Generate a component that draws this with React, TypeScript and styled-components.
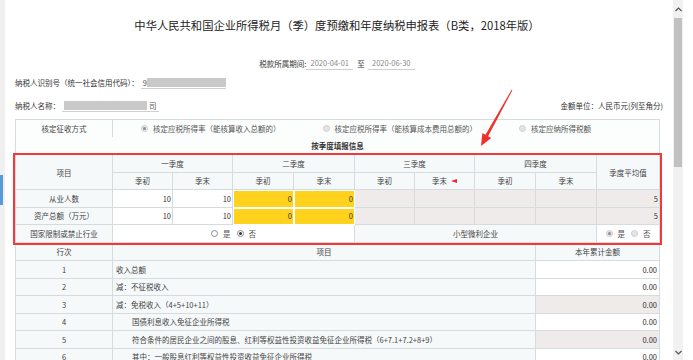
import styled, { createGlobalStyle } from 'styled-components';

const GlobalStyle = createGlobalStyle`
  html, body {
    margin: 0;
    padding: 0;
    background: #fff;
  }
  body {
    font-family: "Noto Sans CJK SC", "Noto Sans", sans-serif;
    color: #333;
  }
`;

const Page = styled.div`
  position: relative;
  display: flex;
  width: 693px;
  height: 360px;
  overflow: hidden;
  background: #fff;
`;

const Gutter = styled.div`
  flex: none;
  width: 5px;
  padding-top: 175px;
  background: #f0f0f0;
`;

const GutterTab = styled.div`
  width: 3px;
  height: 30px;
  background: #5b9ad8;
`;

const Main = styled.div`
  flex: none;
  width: 668px;
  padding: 18px 14px 0 10px;
  box-sizing: border-box;
`;

const Title = styled.h1`
  margin: 0;
  font-size: 11.3px;
  line-height: 14px;
  font-weight: normal;
  text-align: center;
  color: #222;
`;

const PeriodRow = styled.div`
  display: flex;
  justify-content: center;
  align-items: center;
  height: 14px;
  margin-top: 24px;
  font-size: 7.5px;
  color: #333;
`;

const DateField = styled.div`
  width: 47px;
  height: 14px;
  line-height: 14px;
  border-bottom: 1px solid #cfcfcf;
  box-sizing: border-box;
  text-align: center;
  color: #8a8a8a;
`;

const To = styled.span`
  margin: 0 3px 0 4px;
`;

const InfoRow = styled.div<{ $gap: number }>`
  display: flex;
  justify-content: space-between;
  align-items: center;
  height: 13px;
  margin-top: ${(p) => p.$gap}px;
  margin-right: -4px;
  font-size: 7.5px;
  color: #333;
`;

const LabelGroup = styled.div`
  display: flex;
  align-items: center;
`;

const Field = styled.div<{ $width: number }>`
  display: flex;
  align-items: center;
  width: ${(p) => p.$width}px;
  height: 13px;
  padding-left: 2px;
  border-bottom: 1px solid #cfcfcf;
  box-sizing: border-box;
  margin-left: 2px;
  color: #555;
`;

const Redacted = styled.span<{ $width: number }>`
  display: inline-block;
  width: ${(p) => p.$width}px;
  height: 9px;
  background: #c9c9c9;
`;

const Suffix = styled.span`
  margin-left: 2px;
`;

const TableWrap = styled.div`
  position: relative;
  margin-top: 7px;
`;

const Table = styled.table`
  width: 644px;
  border-collapse: collapse;
  table-layout: fixed;
  font-size: 7.5px;
  color: #444;
`;

const Row = styled.tr`
  height: 17.5px;
`;

const Cell = styled.td<{ $bg?: string }>`
  padding: 0 2px;
  border: 1px solid #d6dbde;
  background: ${(p) => p.$bg ?? '#f6f9fa'};
  text-align: center;
  white-space: nowrap;
  overflow: hidden;
`;

const PlainCell = styled.td`
  padding: 0;
  border: 1px solid #d6dbde;
  border-bottom: none;
  background: #fcfdfd;
  text-align: center;
`;

const SectionTitle = styled.td`
  border: 1px solid #d6dbde;
  border-top: none;
  background: #fcfdfd;
  text-align: center;
  font-weight: bold;
  color: #333;
`;

const OptionsCell = styled.td`
  border: 1px solid #d6dbde;
  border-bottom: none;
  background: #fcfdfd;
  padding: 0 0 0 28px;
`;

const Options = styled.div`
  display: flex;
  align-items: center;
  gap: 42px;
`;

const Choice = styled.label`
  display: inline-flex;
  align-items: center;
  gap: 5px;
  color: #555;
`;

const ChoiceGroup = styled.div`
  display: inline-flex;
  align-items: center;
  gap: 6px;
`;

const Radio = styled.span<{ $checked?: boolean; $disabled?: boolean }>`
  position: relative;
  display: inline-block;
  width: 7px;
  height: 7px;
  border-radius: 50%;
  box-sizing: border-box;
  border: 1px solid ${(p) => (p.$disabled ? '#cfcfcf' : '#8a8a8a')};
  background: ${(p) => (p.$disabled ? '#e4e4e4' : '#fff')};
  &::after {
    content: '';
    display: ${(p) => (p.$checked ? 'block' : 'none')};
    position: absolute;
    left: 1px;
    top: 1px;
    width: 3px;
    height: 3px;
    border-radius: 50%;
    background: ${(p) => (p.$disabled ? '#8f8f8f' : '#333')};
  }
`;

const ValueCell = styled.td<{ $tone: 'white' | 'yellow' | 'gray' }>`
  padding: 0 1px 0 0;
  border: 1px solid ${(p) => (p.$tone === 'yellow' ? '#fff' : '#d6dbde')};
  background: ${(p) =>
    p.$tone === 'yellow' ? '#ffd21d' : p.$tone === 'gray' ? '#efebeb' : '#fff'};
  box-shadow: ${(p) => (p.$tone === 'yellow' ? 'inset 1px 1px 0 #fff' : 'none')};
  text-align: right;
  color: #333;
`;

const Flag = styled.span`
  display: inline-block;
  width: 0;
  height: 0;
  margin-left: 4px;
  vertical-align: 1px;
  border-top: 2.5px solid transparent;
  border-bottom: 2.5px solid transparent;
  border-right: 6px solid #f0262b;
`;

const TextCell = styled.td<{ $indent?: boolean }>`
  padding: 0 0 0 ${(p) => (p.$indent ? 19 : 3)}px;
  border: 1px solid #d6dbde;
  background: #f6f9fa;
  text-align: left;
  white-space: nowrap;
  color: #444;
`;

const AmountCell = styled.td<{ $gray?: boolean }>`
  padding: 0 2px 0 0;
  border: 1px solid #d6dbde;
  background: ${(p) => (p.$gray ? '#efebeb' : '#fff')};
  text-align: right;
  color: #333;
`;

const Highlight = styled.div`
  position: absolute;
  left: -2px;
  top: 34px;
  width: 649px;
  height: 92px;
  border: 2px solid #f4383a;
  box-sizing: border-box;
  pointer-events: none;
`;

const Arrow = styled.svg`
  position: absolute;
  left: 475px;
  top: 86px;
  width: 42px;
  height: 64px;
  pointer-events: none;
`;

const Scrollbar = styled.div`
  flex: none;
  display: flex;
  flex-direction: column;
  width: 10px;
  background: #f1f1f1;
`;

const ScrollButton = styled.div<{ $height: number }>`
  display: flex;
  align-items: center;
  justify-content: center;
  height: ${(p) => p.$height}px;
`;

const Thumb = styled.div`
  height: 149px;
  margin: 0 1px;
  background: #c1c1c1;
`;

const Track = styled.div`
  flex: 1;
`;

const quarters = ['一季度', '二季度', '三季度', '四季度'];

const lines = [
  { no: '1', text: '收入总额' },
  { no: '2', text: '减：不征税收入' },
  { no: '3', text: '减：免税收入（4+5+10+11）', gray: true },
  { no: '4', text: '国债利息收入免征企业所得税', indent: true },
  {
    no: '5',
    text: '符合条件的居民企业之间的股息、红利等权益性投资收益免征企业所得税（6+7.1+7.2+8+9）',
    indent: true,
    gray: true,
  },
  { no: '6', text: '其中：一般股息红利等权益性投资收益免征企业所得税', indent: true },
];

const QuarterValues = ({ first, avg }: { first: string; avg: string }) => (
  <>
    <ValueCell $tone="white">{first}</ValueCell>
    <ValueCell $tone="white">{first}</ValueCell>
    <ValueCell $tone="yellow">0</ValueCell>
    <ValueCell $tone="yellow">0</ValueCell>
    <ValueCell $tone="gray" />
    <ValueCell $tone="gray" />
    <ValueCell $tone="gray" />
    <ValueCell $tone="gray" />
    <ValueCell $tone="gray">{avg}</ValueCell>
  </>
);

export default function App() {
  return (
    <>
      <GlobalStyle />
      <Page>
        <Gutter>
          <GutterTab />
        </Gutter>
        <Main>
          <Title>中华人民共和国企业所得税月（季）度预缴和年度纳税申报表（B类，2018年版）</Title>

          <PeriodRow>
            <span>税款所属期间:</span>
            <DateField>2020-04-01</DateField>
            <To>至</To>
            <DateField>2020-06-30</DateField>
          </PeriodRow>

          <InfoRow $gap={6}>
            <LabelGroup>
              <span>纳税人识别号（统一社会信用代码）：</span>
              <Field $width={85}>
                <span>9</span>
                <Redacted $width={79} />
              </Field>
            </LabelGroup>
          </InfoRow>

          <InfoRow $gap={10}>
            <LabelGroup>
              <span>纳税人名称：</span>
              <Field $width={97}>
                <Redacted $width={83} />
                <Suffix>司</Suffix>
              </Field>
            </LabelGroup>
            <span>金额单位：人民币元(列至角分)</span>
          </InfoRow>

          <TableWrap>
            <Table>
              <colgroup>
                <col style={{ width: 97 }} />
                <col style={{ width: 60 }} />
                <col style={{ width: 60 }} />
                <col style={{ width: 61 }} />
                <col style={{ width: 61 }} />
                <col style={{ width: 60 }} />
                <col style={{ width: 60 }} />
                <col style={{ width: 61 }} />
                <col style={{ width: 61 }} />
                <col style={{ width: 63 }} />
              </colgroup>
              <tbody>
                <Row>
                  <PlainCell>核定征收方式</PlainCell>
                  <OptionsCell colSpan={9}>
                    <Options>
                      <Choice>
                        <Radio $checked $disabled />
                        核定应税所得率（能核算收入总额的）
                      </Choice>
                      <Choice>
                        <Radio $disabled />
                        核定应税所得率（能核算成本费用总额的）
                      </Choice>
                      <Choice>
                        <Radio $disabled />
                        核定应纳所得税额
                      </Choice>
                    </Options>
                  </OptionsCell>
                </Row>
                <Row>
                  <SectionTitle colSpan={10}>按季度填报信息</SectionTitle>
                </Row>
                <Row>
                  <Cell rowSpan={2}>项目</Cell>
                  {quarters.map((q) => (
                    <Cell key={q} colSpan={2}>
                      {q}
                    </Cell>
                  ))}
                  <Cell rowSpan={2}>季度平均值</Cell>
                </Row>
                <Row>
                  {quarters.flatMap((q, i) => [
                    <Cell key={q + 'a'}>季初</Cell>,
                    <Cell key={q + 'b'}>
                      季末
                      {i === 2 && <Flag />}
                    </Cell>,
                  ])}
                </Row>
                <Row>
                  <Cell>从业人数</Cell>
                  <QuarterValues first="10" avg="5" />
                </Row>
                <Row>
                  <Cell>资产总额（万元）</Cell>
                  <QuarterValues first="10" avg="5" />
                </Row>
                <Row>
                  <Cell>国家限制或禁止行业</Cell>
                  <Cell colSpan={4} $bg="#fff">
                    <ChoiceGroup>
                      <Choice>
                        <Radio />是
                      </Choice>
                      <Choice>
                        <Radio $checked />否
                      </Choice>
                    </ChoiceGroup>
                  </Cell>
                  <Cell colSpan={4}>小型微利企业</Cell>
                  <Cell $bg="#fff">
                    <ChoiceGroup>
                      <Choice>
                        <Radio $checked $disabled />是
                      </Choice>
                      <Choice>
                        <Radio $disabled />否
                      </Choice>
                    </ChoiceGroup>
                  </Cell>
                </Row>
              </tbody>
            </Table>

            <Table>
              <colgroup>
                <col style={{ width: 97 }} />
                <col style={{ width: 423 }} />
                <col style={{ width: 124 }} />
              </colgroup>
              <tbody>
                <Row>
                  <Cell>行次</Cell>
                  <Cell>项目</Cell>
                  <Cell>本年累计金额</Cell>
                </Row>
                {lines.map((l) => (
                  <Row key={l.no}>
                    <Cell>{l.no}</Cell>
                    <TextCell $indent={l.indent}>{l.text}</TextCell>
                    <AmountCell $gray={l.gray}>0.00</AmountCell>
                  </Row>
                ))}
              </tbody>
            </Table>

            <Highlight />
          </TableWrap>
        </Main>
        <Scrollbar>
          <ScrollButton $height={18}>
            <svg width="7" height="5" viewBox="0 0 7 5">
              <path d="M0.5 4 L3.5 1 L6.5 4" fill="none" stroke="#555" strokeWidth="1.2" />
            </svg>
          </ScrollButton>
          <Thumb />
          <Track />
          <ScrollButton $height={16}>
            <svg width="7" height="5" viewBox="0 0 7 5">
              <path d="M0.5 1 L3.5 4 L6.5 1" fill="none" stroke="#555" strokeWidth="1.2" />
            </svg>
          </ScrollButton>
        </Scrollbar>
        <Arrow viewBox="0 0 42 64">
          <polygon
            points="37.4,4.2 13.1,50.2 16.2,51.9 6,60 7.4,47.1 10.5,48.8 36.6,3.8"
            fill="#f0302c"
          />
        </Arrow>
      </Page>
    </>
  );
}
